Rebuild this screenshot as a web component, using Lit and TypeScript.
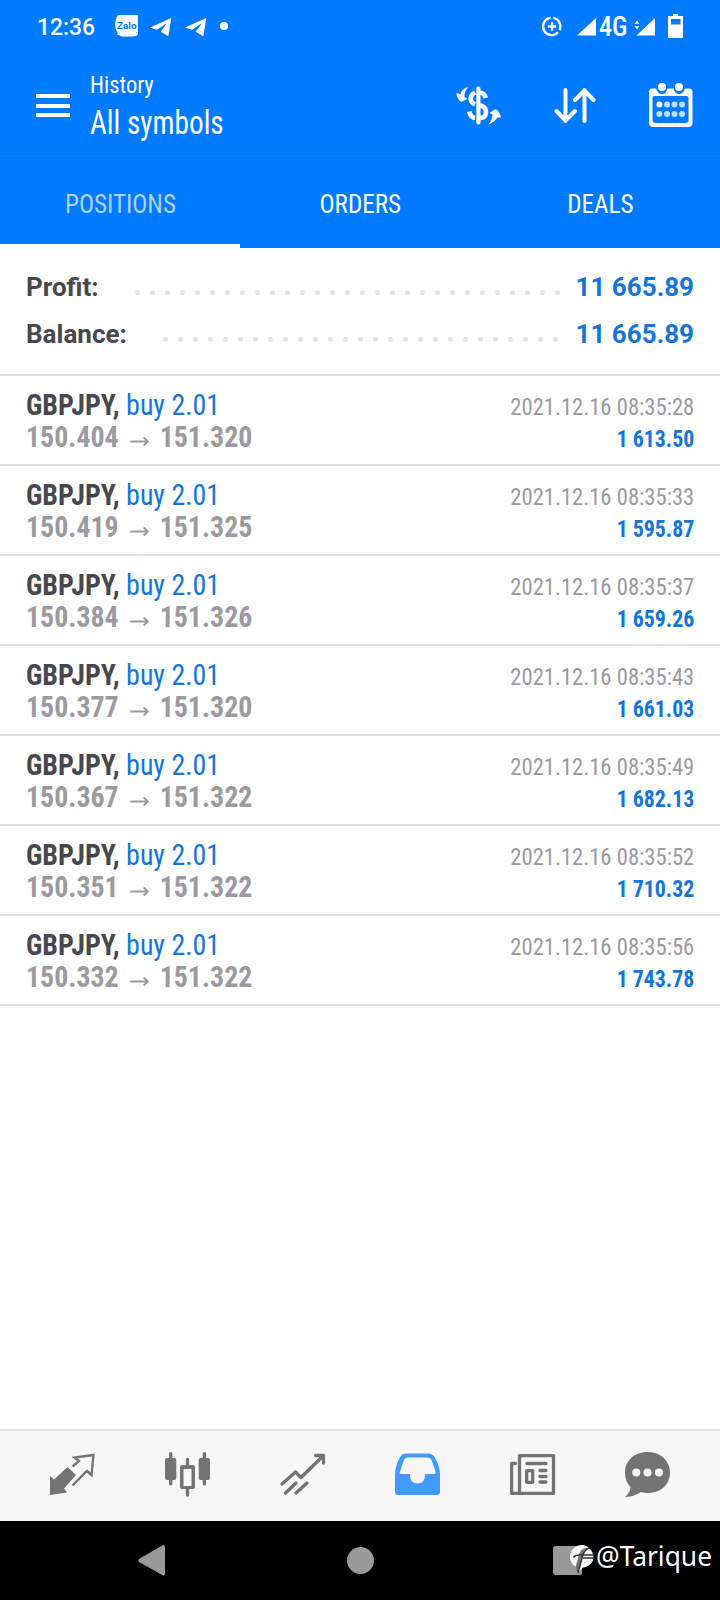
import { LitElement, html, css, svg } from "lit";
import { customElement, state } from "lit/decorators.js";

interface Deal {
  open: string;
  close: string;
  time: string;
  profit: string;
}

const DEALS: Deal[] = [
  { open: "150.404", close: "151.320", time: "08:35:28", profit: "1 613.50" },
  { open: "150.419", close: "151.325", time: "08:35:33", profit: "1 595.87" },
  { open: "150.384", close: "151.326", time: "08:35:37", profit: "1 659.26" },
  { open: "150.377", close: "151.320", time: "08:35:43", profit: "1 661.03" },
  { open: "150.367", close: "151.322", time: "08:35:49", profit: "1 682.13" },
  { open: "150.351", close: "151.322", time: "08:35:52", profit: "1 710.32" },
  { open: "150.332", close: "151.322", time: "08:35:56", profit: "1 743.78" },
];

@customElement("status-bar")
class StatusBar extends LitElement {
  static styles = css`
    :host { display: block; height: 54px; color: #fff; font-family: Roboto, sans-serif; }
    svg { display: block; width: 720px; height: 54px; fill: #fff; }
    .clock { font-size: 24px; font-weight: 500; }
    .zalo { font-size: 9.5px; font-weight: 700; fill: #007aff; }
    .net { font-size: 27px; font-stretch: 75%; font-weight: 500; }
    .ring { fill: none; stroke: #fff; stroke-width: 2.3; }
  `;
  render() {
    return html`<svg viewBox="0 0 720 54">
      <text class="clock" x="37" y="35" textLength="58" lengthAdjust="spacingAndGlyphs">12:36</text>
      <path d="M118 15H138V34Q137 36.500 132 36.500H124Q120 36.500 119 35L117 35Q118 33.500 117.500 32Q115 29 115 24Q115 19 118 15Z"/>
      <text class="zalo" x="117" y="29" textLength="19.500" lengthAdjust="spacingAndGlyphs">Zalo</text>
      <path d="M150 27.500L171.300 18L168.300 36.300L160.700 31.800L167 23L157 29.700Z"/>
      <path d="M185 27.500L206.300 18L203.300 36.300L195.700 31.800L202 23L192 29.700Z"/>
      <circle cx="224" cy="26" r="4"/>
      <path class="ring" d="M553.300 17.900A8.600 8.600 0 0 1 559.500 30.300M558 32.200A8.600 8.600 0 1 1 550.700 17.900M552 22.300V30.700M547.800 26.500H556.200"/>
      <path d="M577 35.500L596 18V35.500Z"/>
      <text class="net" x="599" y="36" textLength="28.500" lengthAdjust="spacingAndGlyphs">4G</text>
      <path d="M636.500 35.500L655 18V35.500Z"/>
      <path d="M634.300 24L637 20.500L639.700 24ZM634.300 26L637 29.500L639.700 26Z"/>
      <path fill-rule="evenodd" d="M673 14H678V16H683V37Q683 38 682 38H669Q668 38 668 37V16H673ZM671 19V24.500H680.500V19Z"/>
    </svg>`;
  }
}

@customElement("app-header")
class AppHeader extends LitElement {
  static styles = css`
    :host { display: flex; height: 104px; box-sizing: border-box; color: #fff; font-family: Roboto, sans-serif; font-stretch: 75%; border-bottom: 1px solid #0671e6; padding: 16px 26px 0 36px; }
    .menu { display: flex; flex-direction: column; gap: 5.5px; width: 34px; margin: 24px 20px 0 0; }
    .menu i { height: 4px; background: #fff; }
    .titles { flex: 1; }
    .small, .big { transform-origin: 0 0; white-space: nowrap; }
    .small { font-size: 24px; line-height: 30px; transform: scaleX(0.94); }
    .big { font-size: 32.5px; line-height: 46px; transform: scaleX(0.9); }
    .actions { display: flex; gap: 48px; padding-top: 9px; }
    svg { width: 48px; height: 50px; fill: #fff; display: block; }
    .line { fill: none; stroke: #fff; stroke-width: 4; stroke-linecap: round; stroke-linejoin: round; }
    .bold { fill: none; stroke: #fff; stroke-width: 4.6; }
    .soft { opacity: 0.75; }
  `;
  render() {
    return html`
      <div class="menu"><i></i><i></i><i></i></div>
      <div class="titles"><div class="small">History</div><div class="big">All symbols</div></div>
      <div class="actions">
        <svg viewBox="453 79 48 50">
          <rect x="475.300" y="86.500" width="4.200" height="38" rx="2"/>
          <path class="bold" d="M479 92.800Q483.500 93 484.800 97.800"/>
          <path class="bold" d="M474 92.500Q469.700 94.500 469.700 98.500Q469.700 102.500 474 104.300"/>
          <path class="bold" d="M468.300 111.500Q469.500 117.500 474 118"/>
          <path class="bold" d="M479 105.300Q485 107 485 112Q485 117.500 479 118.300"/>
          <path d="M467.500 87Q460.500 88.500 459.300 94.500L455.300 92.800Q456.300 100 460.300 102L466.300 98.800L463.300 96.800Q463.500 91 467.500 87ZM487 124.500Q494 122.500 496.300 117.500L500 117.500Q498.500 111 494.500 109L488.500 113L491.500 114.500Q491.500 120.500 487 124.500Z"/>
        </svg>
        <svg viewBox="549.500 79 48 50"><path class="line" d="M565 90V121M556 111L565 120.500L574.500 111M584 121V90M574.500 100L584 90.500L593 100"/></svg>
        <svg viewBox="646 79 48 50">
          <path fill-rule="evenodd" d="M652 88.500H656Q658 94 662 94Q666 94 667.500 88.500H673.500Q675 94 679 94Q683 94 685 88.500H689Q692.500 88.500 692.500 92V123Q692.500 127 688.500 127H653Q649 127 649 123V92Q649 88.500 652 88.500ZM654 96Q652.500 96 652.500 98V120Q652.500 123 655.500 123H685.500Q688.500 123 688.500 120V98Q688.500 96 686.500 96Z"/>
          <circle cx="662" cy="87" r="4"/><circle cx="679" cy="87" r="4"/>
          <circle cx="659.300" cy="104.500" r="3"/>
          <g class="soft">${[667, 674.5, 682].map((x) => svg`<circle cx=${x} cy="104.500" r="3"/>`)}${[659.3, 667, 674.5, 682].map((x) => svg`<circle cx=${x} cy="114" r="3"/>`)}</g>
        </svg>
      </div>`;
  }
}

@customElement("history-tabs")
class HistoryTabs extends LitElement {
  @state() active = 0;
  static styles = css`
    :host { display: grid; grid-template-columns: repeat(3, 1fr); height: 90px; font-family: Roboto, sans-serif; font-stretch: 75%; }
    .tab { box-sizing: border-box; border-bottom: 4px solid transparent; text-align: center; color: #fff; font-size: 26px; line-height: 92px; height: 90px; cursor: pointer; }
    .tab span { display: inline-block; transform: scaleX(0.965); }
    .on { color: #b3d0f2; border-color: #fff; }
  `;
  render() {
    return ["POSITIONS", "ORDERS", "DEALS"].map(
      (t, i) => html`<div class="tab ${i === this.active ? "on" : ""}" @click=${() => (this.active = i)}><span>${t}</span></div>`
    );
  }
}

@customElement("account-summary")
class AccountSummary extends LitElement {
  static styles = css`
    :host { display: block; height: 128px; box-sizing: border-box; padding: 16px 26px 0; border-bottom: 2px solid #e3e3e3; font: bold 26px/47px Roboto, sans-serif; color: #47474f; }
    .line { display: flex; justify-content: space-between; height: 47px; }
    .dots { flex: none; height: 5px; margin: 26px 0 0 auto; background: radial-gradient(circle, #e4e4e4 2.2px, transparent 2.9px) 0 0 / 15px 5px; }
    .profit { width: 435px; margin-right: 11px; }
    .balance { width: 405px; margin-right: 13px; }
    .value { color: #1276dd; }
  `;
  render() {
    return html`
      <div class="line"><span>Profit:</span><span class="dots profit"></span><span class="value">11 665.89</span></div>
      <div class="line"><span>Balance:</span><span class="dots balance"></span><span class="value">11 665.89</span></div>`;
  }
}

@customElement("deal-row")
class DealRow extends LitElement {
  static properties = { deal: { attribute: false } };
  declare deal: Deal;
  static styles = css`
    :host { display: block; height: 90px; box-sizing: border-box; padding: 13px 26px 0; border-bottom: 2px solid #e3e3e3; font-family: Roboto, sans-serif; font-stretch: 75%; }
    .line { display: flex; justify-content: space-between; align-items: baseline; height: 32px; line-height: 32px; font-size: 30px; white-space: pre; }
    .title, .prices { transform: scaleX(0.93); transform-origin: 0 0; }
    .symbol { font-weight: bold; color: #47474f; }
    .side, .profit { color: #1276dd; }
    .prices { display: flex; align-items: baseline; font-weight: bold; color: #9a9a9f; }
    .arrow { width: 20px; height: 10px; margin: 0 12px; stroke: #9a9a9f; stroke-width: 2; fill: none; }
    .time { font-size: 24px; color: #9a9a9f; transform: scaleX(0.942); transform-origin: 100% 0; }
    .profit { font-size: 24px; font-weight: bold; transform: scaleX(0.91); transform-origin: 100% 0; }
  `;
  render() {
    const d = this.deal;
    return html`
      <div class="line"><span class="title"><span class="symbol">GBPJPY, </span><span class="side">buy 2.01</span></span><span class="time">2021.12.16 ${d.time}</span></div>
      <div class="line"><span class="prices">${d.open}<svg class="arrow" viewBox="0 0 20 10"><path d="M0 4.500H19M14.500 .5L19 4.500L14.500 8.500"/></svg>${d.close}</span><span class="profit">${d.profit}</span></div>`;
  }
}

@customElement("bottom-nav")
class BottomNav extends LitElement {
  static styles = css`
    :host { display: block; height: 92px; box-sizing: border-box; border-top: 2px solid #e3e3e3; background: #f7f7f7; }
    .items { display: grid; grid-template-columns: repeat(6, 48px); justify-content: space-between; padding: 20px 49px 0 48px; }
    svg { width: 48px; height: 48px; fill: #737373; display: block; }
    .line { fill: none; stroke: #737373; stroke-width: 3.3; }
    .thin { fill: none; stroke: #737373; stroke-width: 2.4; }
    .round { stroke-linecap: round; stroke-linejoin: round; }
    .blue { fill: #429aff; }
    .hole { fill: #f7f7f7; }
  `;
  render() {
    return html`<div class="items">
      <svg viewBox="48 1451 48 48">
        <path d="M50 1476L54 1479.500L67.500 1467L76 1475L64 1488.500L67 1492.500L50 1495Z"/>
        <path class="thin" d="M72.500 1466.500L79 1461L74.500 1457.500L93.500 1455L91.500 1475L87 1471L72.500 1485.500"/>
      </svg>
      <svg viewBox="163 1451 48 48">
        <path d="M169 1458V1453.500Q169 1452 170.700 1452Q172.400 1452 172.400 1453.500V1458H174.500Q176.300 1458 176.300 1460V1478Q176.300 1480 174.500 1480H172.400V1484Q172.400 1485.600 170.700 1485.600Q169 1485.600 169 1484V1480H167Q165 1480 165 1478V1460Q165 1458 167 1458Z"/>
        <path d="M202.700 1458V1453.500Q202.700 1452 204.400 1452Q206.100 1452 206.100 1453.500V1458H208.200Q210 1458 210 1460V1478Q210 1480 208.200 1480H206.100V1484Q206.100 1485.600 204.400 1485.600Q202.700 1485.600 202.700 1484V1480H200.700Q198.700 1480 198.700 1478V1460Q198.700 1458 200.700 1458Z"/>
        <path class="line round" d="M187.500 1459.500V1466M187.500 1489V1495"/>
        <path fill-rule="evenodd" d="M182 1465H193Q195 1465 195 1467V1487Q195 1489 193 1489H182Q180 1489 180 1487V1467Q180 1465 182 1465ZM183.500 1469V1486H191.500V1469Z"/>
      </svg>
      <svg viewBox="278 1451 48 48">
        <path class="line round" d="M282 1484L295.500 1472L301 1477.500L323 1456M315.500 1455.500H323.500V1463M285.500 1493L296 1483M296 1493L307 1483"/>
      </svg>
      <svg viewBox="393 1451 48 48">
        <path class="blue" d="M406 1453.500H429Q432.500 1453.500 434.500 1457Q440 1466 440 1475V1492Q440 1495 437 1495H398Q395 1495 395 1492V1475Q395 1465 400.500 1456.500Q402 1453.500 406 1453.500Z"/>
        <path class="hole" d="M408 1457.500H427.500Q430.500 1457.500 431.500 1460L435.500 1471.500Q436.300 1474 434 1474H425Q425.500 1483.500 417.500 1483.500Q409.500 1483.500 410 1474H401.500Q399 1474 400 1471.500L403.500 1461Q404.500 1457.500 408 1457.500Z"/>
      </svg>
      <svg viewBox="508 1451 48 48">
        <rect class="line round" x="519.500" y="1455.600" width="34" height="37.800"/>
        <path class="line round" d="M515.500 1463.500H511.600V1493.400H519M527 1463.500H546M540 1470.500H546M540 1476.500H546M540 1482H546"/>
        <rect class="line round" x="526.700" y="1470.700" width="6" height="11.600"/>
      </svg>
      <svg viewBox="623 1451 48 48">
        <path d="M647.500 1452C661 1452 670 1461 670 1472.500C670 1484.500 661 1493 647.500 1493Q644 1493 641 1492Q633.500 1497 625 1497Q630.500 1492 630.500 1487Q625 1481.500 625 1472.500C625 1461 634 1452 647.500 1452Z"/>
        <g class="hole"><circle cx="636.300" cy="1472.500" r="4"/><circle cx="647.500" cy="1472.500" r="4"/><circle cx="659" cy="1472.500" r="4"/></g>
      </svg>
    </div>`;
  }
}

@customElement("system-nav")
class SystemNav extends LitElement {
  static styles = css`
    :host { display: block; height: 79px; background: #000; }
    svg { display: block; width: 720px; height: 79px; fill: #999; }
    .white { fill: #fff; }
    .cut { stroke: #333; stroke-width: 1.6; fill: none; }
    .stem { fill: #777; }
    .mark { font: 27px "Noto Sans", sans-serif; fill: #fff; }
  `;
  render() {
    return html`<svg viewBox="0 1521 720 79">
      <path d="M163 1545Q165 1545 165 1547V1573.500Q165 1576 163 1575.500L139 1562Q137.500 1560.500 139 1559Z"/>
      <circle cx="360.500" cy="1560.500" r="13.500"/>
      <rect x="553" y="1546" width="29" height="29" rx="2.500"/>
      <path class="white" d="M570 1556C571 1549 576 1545 582 1545C588 1545 593 1550 593.500 1557C593.500 1565 586 1567 582 1568Q580 1572 577.500 1573L577 1567.500Q569 1563 570 1556Z"/>
      <path class="stem" d="M590 1547.500Q581 1547 579 1554L575.500 1567L577.500 1573L582.500 1556Q584 1550 590 1547.500Z"/>
      <path class="cut" d="M573.500 1557.500Q575 1555 580 1555H594M583 1558H594M590 1547.700Q584 1549.500 582.500 1556L578 1573"/>
      <text class="mark" x="596" y="1566" textLength="116" lengthAdjust="spacingAndGlyphs">@Tarique</text>
    </svg>`;
  }
}

@customElement("app-root")
class AppRoot extends LitElement {
  static styles = css`
    :host { display: flex; flex-direction: column; width: 720px; height: 1600px; background: #fff; }
    .top { background: #007aff; }
    .list { flex: 1; }
  `;
  render() {
    return html`
      <div class="top"><status-bar></status-bar><app-header></app-header><history-tabs></history-tabs></div>
      <account-summary></account-summary>
      <div class="list">${DEALS.map((d) => html`<deal-row .deal=${d}></deal-row>`)}</div>
      <bottom-nav></bottom-nav>
      <system-nav></system-nav>`;
  }
}
